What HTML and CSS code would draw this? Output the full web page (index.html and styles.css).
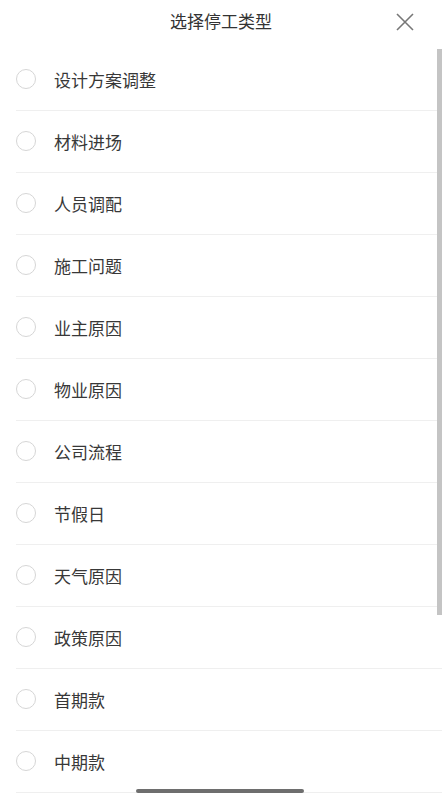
FILE: index.html
```html
<!DOCTYPE html>
<html lang="zh-CN">
<head>
    <meta charset="UTF-8">
    <meta name="viewport" content="width=device-width, initial-scale=1.0">
    <title>选择停工类型</title>
    <link rel="stylesheet" href="styles.css">
</head>
<body>
    <div class="sheet">
        <!-- header -->
        <div class="sheet-header">
            <h1 class="sheet-title">选择停工类型</h1>
            <span class="close">
                <svg width="18" height="18" viewBox="0 0 18 18">
                    <path d="M1 1 L17 17 M17 1 L1 17" stroke="#777" stroke-width="1.6" fill="none"/>
                </svg>
            </span>
        </div>

        <!-- options -->
        <ul class="option-list">
            <li class="option"><span class="radio"></span><span class="label">设计方案调整</span></li>
            <li class="option"><span class="radio"></span><span class="label">材料进场</span></li>
            <li class="option"><span class="radio"></span><span class="label">人员调配</span></li>
            <li class="option"><span class="radio"></span><span class="label">施工问题</span></li>
            <li class="option"><span class="radio"></span><span class="label">业主原因</span></li>
            <li class="option"><span class="radio"></span><span class="label">物业原因</span></li>
            <li class="option"><span class="radio"></span><span class="label">公司流程</span></li>
            <li class="option"><span class="radio"></span><span class="label">节假日</span></li>
            <li class="option"><span class="radio"></span><span class="label">天气原因</span></li>
            <li class="option"><span class="radio"></span><span class="label">政策原因</span></li>
            <li class="option"><span class="radio"></span><span class="label">首期款</span></li>
            <li class="option"><span class="radio"></span><span class="label">中期款</span></li>
        </ul>

        <div class="scrollbar"></div>
        <div class="home-bar"></div>
    </div>
</body>
</html>
```

FILE: styles.css
```css
body {
    margin: 0;
    background-color: #fff;
    font-family: "Noto Sans CJK SC", "Noto Sans", sans-serif;
    color: #333;
}
.sheet {
    position: relative;
    width: 442px;
    height: 800px;
    overflow: hidden;
}
.sheet-header {
    height: 49px;
    display: flex;
    align-items: center;
    justify-content: center;
    position: relative;
}
.sheet-title {
    margin: 0;
    margin-top: -9px;
    font-size: 17px;
    font-weight: normal;
    color: #333;
}
.close {
    position: absolute;
    right: 28px;
    top: 12px;
    width: 18px;
    height: 18px;
}
.option-list {
    list-style: none;
    margin: 0;
    padding: 0 0 0 16px;
}
.option {
    height: 61px;
    display: flex;
    align-items: center;
    border-bottom: 1px solid #efefef;
}
.radio {
    width: 20px;
    height: 20px;
    border: 1px solid #d6d6d6;
    border-radius: 50%;
    box-sizing: border-box;
    margin-right: 18px;
    margin-top: -1px;
}
.label {
    font-size: 17px;
    color: #383838;
    margin-top: -1px;
}
.scrollbar {
    position: absolute;
    right: 0;
    top: 49px;
    width: 5px;
    height: 566px;
    background-color: #c4c4c4;
}
.home-bar {
    position: absolute;
    left: 136px;
    bottom: 7px;
    width: 168px;
    height: 4px;
    border-radius: 2px;
    background-color: #6e6e6e;
}
```
